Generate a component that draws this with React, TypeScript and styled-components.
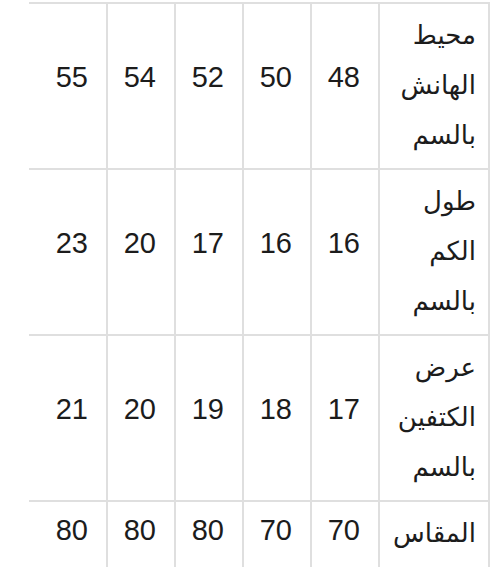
import React from "react";
import styled, { createGlobalStyle } from "styled-components";

const Global = createGlobalStyle`
  html, body {
    margin: 0;
    padding: 0;
    background: #ffffff;
  }
  body {
    font-family: "Liberation Sans", "DejaVu Sans", sans-serif;
    color: #1c1c1c;
  }
`;

const Page = styled.div`
  direction: rtl;
  display: flex;
  justify-content: flex-start;
  padding: 2px 2px 0 0;
  width: 492px;
  box-sizing: border-box;
  overflow: hidden;
`;

const Table = styled.table`
  border-collapse: collapse;
  width: 461px;
  table-layout: fixed;
`;

const Row = styled.tr`
  border-top: 2px solid #dfdfdf;
`;

const LabelCell = styled.td`
  width: 110px;
  box-sizing: border-box;
  padding: 6px 12px 8px 0;
  border-right: 2px solid #dfdfdf;
  text-align: right;
  vertical-align: top;
  font-family: "DejaVu Sans", "Liberation Sans", sans-serif;
  font-size: 26px;
  line-height: 50px;
  white-space: nowrap;
`;

const ValueCell = styled.td<{ $wide?: boolean }>`
  width: ${(p) => (p.$wide ? "78px" : "68px")};
  box-sizing: border-box;
  padding: 0 18px 18px 0;
  border-right: 2px solid #dfdfdf;
  border-left: none;
  text-align: right;
  vertical-align: middle;
  font-family: "Liberation Sans", Arial, sans-serif;
  font-size: 29px;
  line-height: 50px;
`;

const LastRow = styled(Row)`
  & > td {
    padding-bottom: 30px;
  }
`;

type RowData = { label: string[]; values: number[] };

const rows: RowData[] = [
  { label: ["محيط", "الهانش", "بالسم"], values: [48, 50, 52, 54, 55] },
  { label: ["طول", "الكم", "بالسم"], values: [16, 16, 17, 20, 23] },
  { label: ["عرض", "الكتفين", "بالسم"], values: [17, 18, 19, 20, 21] },
];

const lastRow: RowData = { label: ["المقاس"], values: [70, 70, 80, 80, 80] };

function Cells({ data }: { data: RowData }) {
  return (
    <>
      <LabelCell>
        {data.label.map((w, i) => (
          <React.Fragment key={i}>
            {i > 0 && <br />}
            {w}
          </React.Fragment>
        ))}
      </LabelCell>
      {data.values.map((v, i) => (
        <ValueCell key={i} $wide={i === data.values.length - 1}>
          {v}
        </ValueCell>
      ))}
    </>
  );
}

export default function App() {
  return (
    <>
      <Global />
      <Page>
        <Table>
          <tbody>
            {rows.map((r, i) => (
              <Row key={i}>
                <Cells data={r} />
              </Row>
            ))}
            <LastRow>
              <Cells data={lastRow} />
            </LastRow>
          </tbody>
        </Table>
      </Page>
    </>
  );
}
